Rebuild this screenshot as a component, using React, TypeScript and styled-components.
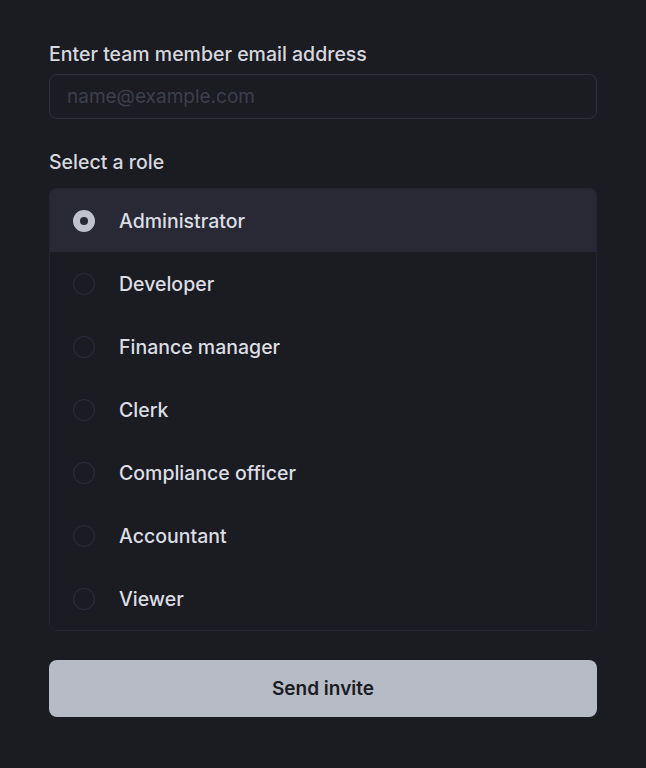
import React, { useState } from "react";
import styled, { createGlobalStyle } from "styled-components";

const Global = createGlobalStyle`
  html, body {
    margin: 0;
    padding: 0;
    background: #1b1b22;
  }
  body {
    font-family: Inter, "Noto Sans", sans-serif;
    -webkit-font-smoothing: antialiased;
  }
  * { box-sizing: border-box; }
`;

const Page = styled.div`
  min-height: 768px;
  background: #1b1b22;
  padding: 42px 49px 0 49px;
`;

const Form = styled.form`
  display: flex;
  flex-direction: column;
  width: 548px;
`;

const Label = styled.label<{ $gap: number }>`
  display: block;
  font-size: 19.5px;
  line-height: 24px;
  font-weight: 500;
  color: #d6d8df;
  margin-bottom: ${(p) => p.$gap}px;
`;

const Input = styled.input`
  height: 45px;
  width: 100%;
  background: #1b1b22;
  border: 1px solid #2f303b;
  border-radius: 8px;
  padding: 0 17px;
  font-family: Inter, "Noto Sans", sans-serif;
  font-size: 19px;
  color: #d6d8df;
  outline: none;
  margin-bottom: 31px;
  &::placeholder {
    color: #3d3f4c;
  }
`;

const List = styled.div`
  display: flex;
  flex-direction: column;
  border: 1px solid #25262f;
  border-radius: 7px;
  overflow: hidden;
  margin-bottom: 29px;
`;

const Row = styled.label<{ $selected: boolean }>`
  display: flex;
  align-items: center;
  height: 63px;
  padding-left: 23px;
  gap: 24px;
  cursor: pointer;
  background: ${(p) => (p.$selected ? "#282934" : "#1b1b22")};
`;

const Radio = styled.span<{ $checked: boolean }>`
  width: 22px;
  height: 22px;
  border-radius: 50%;
  flex: none;
  display: flex;
  align-items: center;
  justify-content: center;
  background: ${(p) => (p.$checked ? "#c0c3cd" : "transparent")};
  border: ${(p) => (p.$checked ? "none" : "1.5px solid #2e2f3b")};
  &::after {
    content: "";
    display: ${(p) => (p.$checked ? "block" : "none")};
    width: 8px;
    height: 8px;
    border-radius: 50%;
    background: #282934;
  }
`;

const RowText = styled.span`
  font-size: 19.5px;
  font-weight: 500;
  color: #dcdee4;
  line-height: 24px;
`;

const Button = styled.button`
  height: 57px;
  width: 100%;
  border: none;
  border-radius: 8px;
  background: #b7bbc6;
  color: #1b1b22;
  font-family: Inter, "Noto Sans", sans-serif;
  font-size: 19px;
  font-weight: 600;
  cursor: pointer;
`;

const roles = [
  "Administrator",
  "Developer",
  "Finance manager",
  "Clerk",
  "Compliance officer",
  "Accountant",
  "Viewer",
];

export default function App() {
  const [role, setRole] = useState("Administrator");
  return (
    <Page>
      <Global />
      <Form onSubmit={(e) => e.preventDefault()}>
        <Label $gap={8} htmlFor="email">Enter team member email address</Label>
        <Input id="email" type="email" placeholder="name@example.com" />
        <Label $gap={14}>Select a role</Label>
        <List role="radiogroup">
          {roles.map((r) => (
            <Row key={r} $selected={r === role} onClick={() => setRole(r)}>
              <Radio $checked={r === role} />
              <RowText>{r}</RowText>
            </Row>
          ))}
        </List>
        <Button type="submit">Send invite</Button>
      </Form>
    </Page>
  );
}
